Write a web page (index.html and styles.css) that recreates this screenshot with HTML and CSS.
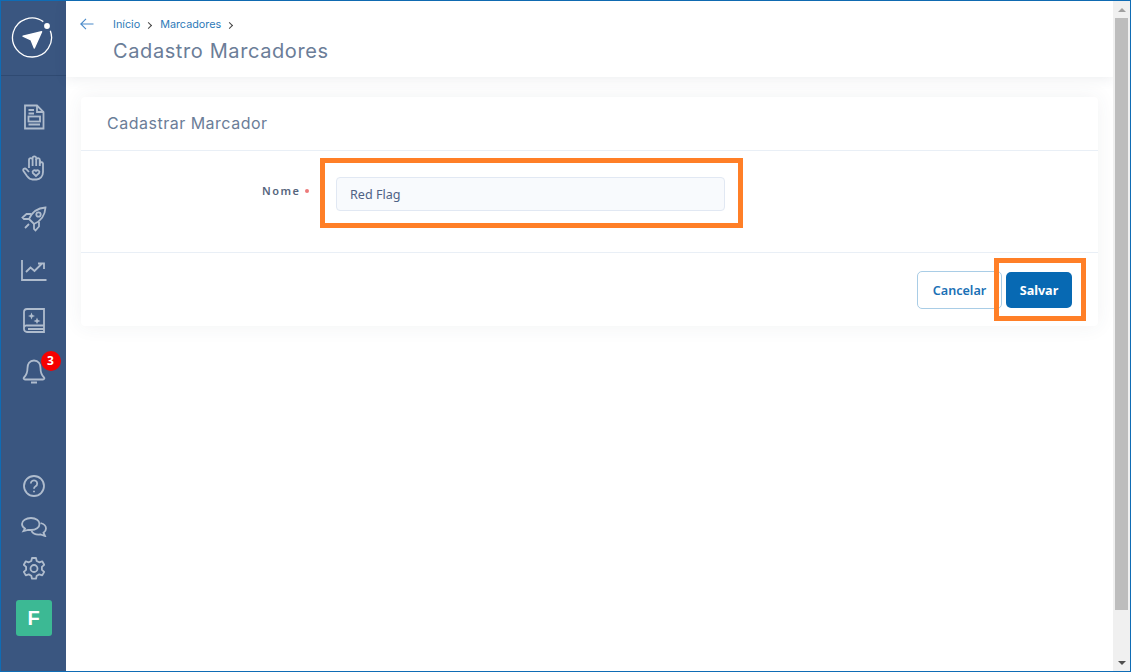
FILE: index.html
```html
<!DOCTYPE html>
<html lang="pt-BR">
<head>
<meta charset="utf-8">
<title>Cadastro Marcadores</title>
<link rel="stylesheet" href="styles.css">
</head>
<body>
<div class="window">
  <aside class="sidebar">
    <div class="logo-box">
      <svg class="logo" viewBox="0 0 42 42" width="42" height="42" fill="none">
        <path d="M32.300 4.600A19.500 19.500 0 1 0 39.300 13.700" stroke="#fff" stroke-width="1.300"/>
        <circle cx="36" cy="9" r="2.900" fill="#fff"/>
        <path d="M12 19.200 30.600 14.800 23.300 31 20 22.800Z" fill="#fff" stroke="#fff" stroke-width="1.400" stroke-linejoin="round"/>
      </svg>
    </div>
    <nav class="nav-top">
      <div class="nav-item"><svg class="icon" viewBox="0 0 24 26" width="24" height="26"><path d="M3 1.500H15L21.500 8V24.500H3Z"/><path d="M15 1.500V8H21.500M6.500 6H12M6.500 9.500H12M6.500 20.500H18"/><rect x="6.500" y="12.500" width="11.500" height="5"/></svg></div>
      <div class="nav-item"><svg class="icon" viewBox="0 0 24 26" width="24" height="26"><path d="M7 13V5a1.800 1.800 0 0 1 3.600 0V3.200a1.800 1.800 0 0 1 3.600 0V5a1.800 1.800 0 0 1 3.600 0v3a1.800 1.800 0 0 1 3.200 .5V17c0 4.500-3 7.500-6.500 7.500h-4c-2.500 0-4-1.500-5.500-3.500L1.500 16c-1-1.800 1.200-3.300 2.800-1.800L7 17"/><path d="M10.600 5v6M14.200 4v7M17.800 5v6"/><path d="M14 21l-3.200-3a1.900 1.900 0 0 1 3.200-2 1.900 1.900 0 0 1 3.200 2Z"/></svg></div>
      <div class="nav-item"><svg class="icon" viewBox="0 0 26 26" width="26" height="26"><path d="M8 13C11 6 17 2 24.500 1.500C24 9 20 15 13 18Z"/><circle cx="17.500" cy="8.500" r="2.200"/><path d="M8 13H3L1.500 11.500L5.500 8H10M13 18V23L14.500 24.500L18 20.500V16M8 18L4 22"/></svg></div>
      <div class="nav-item"><svg class="icon" viewBox="0 0 26 22" width="26" height="22"><path d="M1 1V21H25.500M5 13l4.500-4.500 4 3.500 7-7M17 4.500H23V10"/></svg></div>
      <div class="nav-item"><svg class="icon" viewBox="0 0 22 25" width="22" height="25"><path d="M4 1H21V24H4a3 3 0 0 1-3-3V4a3 3 0 0 1 3-3ZM1 20a2.500 2.500 0 0 1 3-2.500H21M5 21H21"/><path class="fill" d="M8.500 4.500l1 2.500 2.500 1-2.500 1-1 2.500-1-2.500-2.500-1 2.500-1ZM14 9.500l1 2.500 2.500 1-2.500 1-1 2-1-2-2.500-1 2.500-1Z"/></svg></div>
      <div class="nav-item bell">
        <svg class="icon bell-icon" viewBox="0 0 24 26" width="24" height="26"><path d="M12 2.500c-4.500 0-6.500 3.500-6.500 7.500 0 5-1.500 7.500-3.500 9.500-1 1 0 2 1 2H21c1 0 2-1 1-2-2-2-3.500-4.500-3.500-9.500 0-4-2-7.500-6.500-7.500ZM9 24.500h6"/></svg>
        <span class="badge">3</span>
      </div>
    </nav>
    <nav class="nav-bottom">
      <svg class="icon" viewBox="0 0 22 22" width="22" height="22"><circle cx="11" cy="11" r="10"/><path d="M7.800 8.500a3.200 3.200 0 1 1 4.800 2.800c-1 .6-1.600 1.200-1.600 2.400"/><path d="M11 15.800v1.500"/></svg>
      <svg class="icon" viewBox="0 0 26 20" width="26" height="20"><path d="M10 1C5 1 1 3.500 1 7c0 2 1.200 3.500 3 4.500L2.500 14 7 12.800c1 .2 2 .2 3 .2 5 0 8.500-2.500 8.500-6S15 1 10 1Z"/><path d="M19.500 6c3 .8 5.500 2.700 5.500 5.500 0 1.800-1 3.200-2.500 4.200L24 19l-4.500-1.500c-4 .5-7.500-.8-9-3.500"/></svg>
      <svg class="icon" viewBox="0 0 22 23" width="22" height="23"><circle cx="11" cy="11.500" r="3.500"/><path d="M9 1h4l.7 3 2.500 1.300 3-1 2 3.500-2.300 2.100v2.900l2.300 2.100-2 3.500-3-1-2.500 1.300-.7 3H9l-.7-3-2.500-1.300-3 1-2-3.500 2.300-2.100V9.900L.8 7.800l2-3.500 3 1 2.500-1.300Z" stroke-linejoin="round"/></svg>
      <div class="avatar">F</div>
    </nav>
  </aside>
  <main class="main">
    <header class="topbar">
      <svg class="back" viewBox="0 0 14 12" width="14" height="12" fill="none"><path d="M13.500 6H.8M6 .8.800 6 6 11.200" stroke="#4a8ac9" stroke-width="1.100"/></svg>
      <div class="titles">
        <div class="crumbs"><a>Início</a><span class="sep"></span><a>Marcadores</a><span class="sep"></span></div>
        <h1>Cadastro Marcadores</h1>
      </div>
    </header>
    <section class="content">
      <div class="card">
        <div class="card-head">Cadastrar Marcador</div>
        <div class="card-body">
          <label class="field-label">Nome<i></i></label>
          <div class="input">Red Flag</div>
        </div>
        <div class="card-foot">
          <button class="btn btn-ghost">Cancelar</button>
          <button class="btn btn-primary">Salvar</button>
        </div>
      </div>
    </section>
  </main>
  <div class="scrollbar">
    <span class="arrow up"></span>
    <div class="thumb"></div>
    <span class="arrow down"></span>
  </div>
  <div class="mark mark-input"></div>
  <div class="mark mark-save"></div>
</div>
</body>
</html>
```
FILE: styles.css
```css
* { box-sizing: border-box; }
html, body { margin: 0; height: 100%; overflow: hidden; }
body { font-family: "Noto Sans", "Open Sans", sans-serif; background: #fff; }
.window {
  position: relative;
  display: flex;
  width: 1131px;
  height: 672px;
  border: 1px solid #0f6cb5;
}
.sidebar {
  width: 65px;
  flex: none;
  background: #3a5680;
  display: flex;
  flex-direction: column;
  align-items: center;
}
.logo-box {
  width: 100%;
  height: 75px;
  border-bottom: 1px solid #2f4a72;
  display: flex;
  align-items: center;
  justify-content: center;
  padding: 0 3px 1px 0;
}
.nav-top {
  display: flex;
  flex-direction: column;
  align-items: center;
  padding-top: 15px;
}
.nav-item {
  height: 51px;
  display: flex;
  align-items: center;
  justify-content: center;
}
.nav-bottom {
  margin-top: auto;
  display: flex;
  flex-direction: column;
  align-items: center;
  gap: 20px;
  padding-bottom: 35px;
}
.icon { fill: none; stroke: #afbccd; stroke-width: 1.800; display: block; }
.icon .fill { fill: #afbccd; stroke: none; }
.bell { position: relative; }
.bell-icon { margin-top: -2px; }
.badge {
  position: absolute;
  left: 19px;
  top: 5px;
  width: 20px;
  height: 20px;
  border-radius: 50%;
  background: #f50000;
  color: #fff;
  font: 700 12px/20px "Noto Sans", sans-serif;
  text-align: center;
}
.avatar {
  width: 36px;
  height: 36px;
  border-radius: 3px;
  background: #3cb994;
  color: #fff;
  font: 700 20px/36px "Liberation Sans", sans-serif;
  text-align: center;
}
.main { flex: 1; min-width: 0; display: flex; flex-direction: column; background: #fff; }
.topbar {
  height: 76px;
  flex: none;
  background: #fff;
  display: flex;
  padding: 17px 0 0 14px;
  box-shadow: 0 2px 12px rgba(60, 70, 90, .09);
  position: relative;
}
.back { flex: none; }
.titles { margin-left: 19px; }
.crumbs {
  display: flex;
  align-items: center;
  font: 400 10.800px/14px Inter, "Noto Sans", sans-serif;
  color: #2e7ab8;
}
.sep {
  width: 5px;
  height: 5px;
  border-top: 1.400px solid #444;
  border-right: 1.400px solid #444;
  transform: rotate(45deg);
  margin: 0 9px 0 6px;
}
h1 {
  margin: 6px 0 0;
  font: 400 20px/26px Inter, "Noto Sans", sans-serif;
  letter-spacing: .6px;
  color: #6b7d98;
}
.content { flex: 1; padding: 20px 15px 0 15px; background: #fff; }
.card {
  width: 1017px;
  background: #fff;
  border-radius: 4px;
  box-shadow: 0 0 20px rgba(60, 70, 90, .07);
}
.card-head {
  height: 54px;
  border-bottom: 1px solid #e9eff6;
  padding: 15px 0 0 26px;
  font: 400 16px/22px Inter, "Noto Sans", sans-serif;
  letter-spacing: .5px;
  color: #6b7d98;
}
.card-body {
  height: 102px;
  border-bottom: 1px solid #e9eff6;
  display: flex;
  padding-top: 26px;
  padding-left: 181px;
}
.field-label {
  font: 600 11px/28px "Noto Sans", sans-serif;
  letter-spacing: 1.500px;
  color: #56657d;
  width: 74px;
  display: flex;
  align-items: flex-start;
  height: 28px;
}
.field-label i {
  width: 4px;
  height: 4px;
  border-radius: 50%;
  background: #ec7a7a;
  margin: 12px 0 0 4px;
}
.input {
  width: 389px;
  height: 34px;
  border: 1px solid #e1e8f3;
  border-radius: 4px;
  background: #f8fafd;
  padding-left: 13px;
  font-size: 12.600px;
  line-height: 33px;
  color: #4f6285;
}
.card-foot {
  height: 73px;
  display: flex;
  justify-content: flex-end;
  align-items: center;
  padding: 0 26px 0 0;
}
.btn {
  font: 600 12.600px/1 "Noto Sans", sans-serif;
  border-radius: 5px;
  cursor: pointer;
  padding: 3px 0 0;
}
.btn-ghost {
  width: 85px;
  height: 38px;
  background: #fff;
  border: 1px solid #a9cde6;
  color: #1a70b5;
  margin-right: 4px;
}
.btn-primary {
  width: 66px;
  height: 36px;
  background: #0769b3;
  border: 0;
  color: #fff;
  font-weight: 700;
}
.scrollbar {
  width: 17px;
  flex: none;
  background: #f0f0f0;
  position: relative;
  display: flex;
  flex-direction: column;
  align-items: center;
}
.arrow { width: 0; height: 0; border-left: 4px solid transparent; border-right: 4px solid transparent; flex: none; }
.arrow.up { border-bottom: 4px solid #a0a0a0; margin-top: 7px; }
.arrow.down { border-top: 4px solid #505050; margin-bottom: 6px; }
.thumb { width: 13px; height: 592px; margin: 6px 0 auto; background: #bdbdbd; }
.mark { position: absolute; border: 5px solid #ff7f27; pointer-events: none; }
.mark-input { left: 319px; top: 157px; width: 423px; height: 70px; }
.mark-save { left: 993px; top: 257px; width: 92px; height: 63px; }
```
